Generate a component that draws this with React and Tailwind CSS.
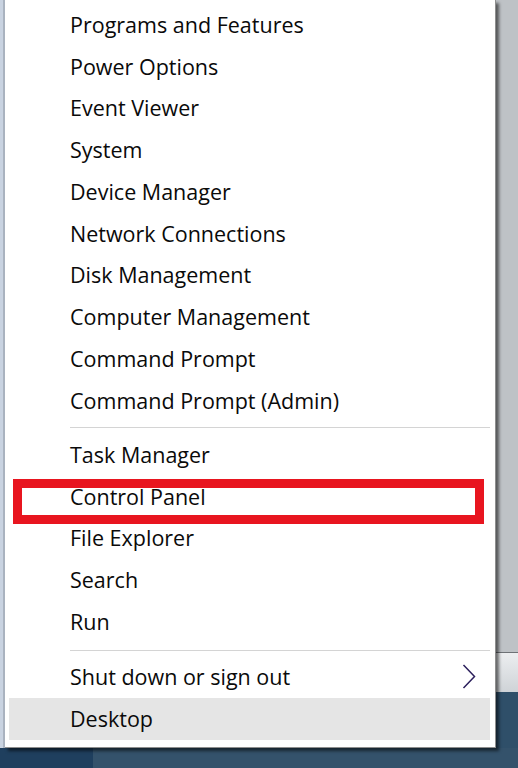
import React from "react";

const groups = [
  [
    "Programs and Features",
    "Power Options",
    "Event Viewer",
    "System",
    "Device Manager",
    "Network Connections",
    "Disk Management",
    "Computer Management",
    "Command Prompt",
    "Command Prompt (Admin)",
  ],
  ["Task Manager", "Control Panel", "File Explorer", "Search", "Run"],
];

function Item({ label, active, submenu }) {
  return (
    <div
      className={`flex h-[41.75px] items-center justify-between pl-[61px] pr-[14px] ${
        active ? "bg-[#e5e5e5]" : ""
      }`}
    >
      <span>{label}</span>
      {submenu && (
        <svg width="14" height="26" viewBox="0 0 14 26" className="text-[#2b1f5c]">
          <polyline
            points="1.5,1 12.5,12.5 1.5,24"
            fill="none"
            stroke="currentColor"
            strokeWidth="1.5"
          />
        </svg>
      )}
    </div>
  );
}

function Separator() {
  return (
    <div className="flex h-[12.5px] items-center pl-[61px]">
      <div className="h-px w-full bg-[#d4d4d4]" />
    </div>
  );
}

export default function App() {
  return (
    <div
      className="flex h-[768px] w-[518px] flex-col overflow-hidden bg-[#2f4f69] text-[21.5px] text-[#0a0a0a]"
      style={{ fontFamily: '"Open Sans", "Noto Sans", sans-serif' }}
    >
      <div className="flex h-[748px] shrink-0">
        {/* window edge behind the menu */}
        <div className="flex w-[5px] shrink-0">
          <div className="w-[3px] bg-[#c9d3e1]" />
          <div className="w-[2px] bg-[#aab3c0]" />
        </div>

        {/* the menu */}
        <div className="relative z-10 flex w-[491px] shrink-0 flex-col border-r border-b border-[#8e8e8e] bg-white pt-[4px] pl-[4px] pr-[5px] shadow-[3px_3px_3px_rgba(0,0,0,0.55)]">
          {groups[0].map((t) => (
            <Item key={t} label={t} />
          ))}
          <Separator />
          {groups[1].map((t) => (
            <Item key={t} label={t} />
          ))}
          <div className="h-[1px]" />
          <Separator />
          <Item label="Shut down or sign out" submenu />
          <Item label="Desktop" active />

          {/* red highlight frame */}
          <div className="absolute left-[8px] top-[479px] h-[45px] w-[471px] border-[9px] border-[#e8151f]" />
        </div>

        {/* desktop to the right */}
        <div className="flex flex-1 flex-col">
          <div className="h-[652px] bg-[#bec2c6]" />
          <div className="h-px bg-[#6e7276]" />
          <div className="h-[39px] bg-gradient-to-b from-[#eceef0] to-[#cfd3d7]" />
          <div className="flex-1 bg-[#2f4f69]" />
        </div>
      </div>

      {/* taskbar strip */}
      <div className="flex flex-1">
        <div className="w-[93px] bg-[#1f3f5e]" />
        <div className="flex-1 bg-[#34526b]" />
      </div>
    </div>
  );
}
